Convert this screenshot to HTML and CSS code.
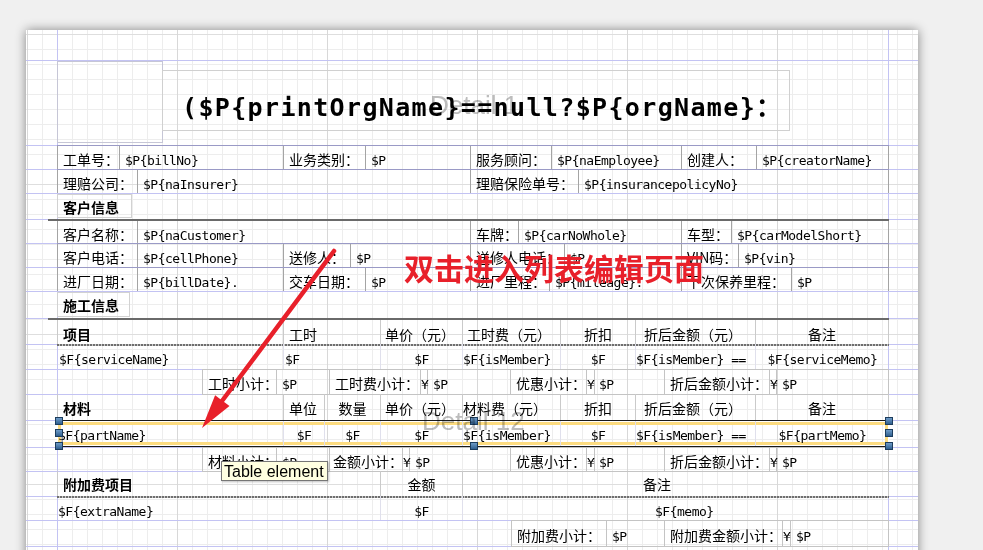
FILE: index.html
```html
<!DOCTYPE html>
<html lang="zh-CN">
<head>
<meta charset="utf-8">
<title>Report Designer</title>
<link rel="stylesheet" href="styles.css">
</head>
<body>
<div class="page">
  <div class="band h85">
    <div class="content title-row">
      <div class="logo-box"></div>
      <div class="title-box"><span class="title-text">($P{printOrgName}==null?$P{orgName}：</span></div>
    </div>
  </div>

  <div class="band h24">
    <div class="content info r1">
      <div class="c">工单号：</div>
      <div class="c"><span class="v">$P{billNo}</span></div>
      <div class="c">业务类别：</div>
      <div class="c"><span class="v">$P</span></div>
      <div class="c">服务顾问：</div>
      <div class="c"><span class="v">$P{naEmployee}</span></div>
      <div class="c">创建人：</div>
      <div class="c"><span class="v">$P{creatorName}</span></div>
    </div>
  </div>

  <div class="band h24">
    <div class="content info r2">
      <div class="c">理赔公司：</div>
      <div class="c"><span class="v">$P{naInsurer}</span></div>
      <div class="c">理赔保险单号：</div>
      <div class="c"><span class="v">$P{insurancepolicyNo}</span></div>
    </div>
  </div>

  <div class="band h26">
    <div class="content sec"><div class="sbox s1">客户信息</div></div>
  </div>

  <div class="band h24">
    <div class="content info thick r3">
      <div class="c">客户名称：</div>
      <div class="c"><span class="v">$P{naCustomer}</span></div>
      <div class="c">车牌：</div>
      <div class="c"><span class="v">$P{carNoWhole}</span></div>
      <div class="c">车型：</div>
      <div class="c"><span class="v">$P{carModelShort}</span></div>
    </div>
  </div>

  <div class="band h24">
    <div class="content info r4">
      <div class="c">客户电话：</div>
      <div class="c"><span class="v">$P{cellPhone}</span></div>
      <div class="c">送修人：</div>
      <div class="c"><span class="v">$P</span></div>
      <div class="c">送修人电话：</div>
      <div class="c"><span class="v">$P</span></div>
      <div class="c">VIN码：</div>
      <div class="c"><span class="v">$P{vin}</span></div>
    </div>
  </div>

  <div class="band h24">
    <div class="content info r5">
      <div class="c">进厂日期：</div>
      <div class="c"><span class="v">$P{billDate}.</span></div>
      <div class="c">交车日期：</div>
      <div class="c"><span class="v">$P</span></div>
      <div class="c">进厂里程：</div>
      <div class="c"><span class="v">$P{mileage}.</span></div>
      <div class="c">下次保养里程：</div>
      <div class="c"><span class="v">$P</span></div>
    </div>
  </div>

  <div class="band h27">
    <div class="content sec"><div class="sbox s2">施工信息</div></div>
  </div>

  <div class="band h26">
    <div class="content th thick t1">
      <div class="c b">项目</div>
      <div class="c">工时</div>
      <div class="c p4">单价（元）</div>
      <div class="c p4">工时费（元）</div>
      <div class="c ctr">折扣</div>
      <div class="c p8">折后金额（元）</div>
      <div class="c ctr">备注</div>
    </div>
  </div>

  <div class="band h25">
    <div class="content td t1">
      <div class="c p2"><span class="v">$F{serviceName}</span></div>
      <div class="c p1"><span class="v">$F</span></div>
      <div class="c ctr"><span class="v">$F</span></div>
      <div class="c p0"><span class="v">$F{isMember}</span></div>
      <div class="c ctr"><span class="v">$F</span></div>
      <div class="c p0"><span class="v">$F{isMember} ==</span></div>
      <div class="c ctr"><span class="v">$F{serviceMemo}</span></div>
    </div>
  </div>

  <div class="band h25">
    <div class="content sub u1">
      <div></div>
      <div class="c bx first">工时小计：</div>
      <div class="c bx"><span class="v">$P</span></div>
      <div class="c bx">工时费小计：</div>
      <div class="c bx yen"><span class="v">¥</span></div>
      <div class="c bx"><span class="v">$P</span></div>
      <div class="c bx">优惠小计：</div>
      <div class="c bx yen"><span class="v">¥</span></div>
      <div class="c bx p4"><span class="v">$P</span></div>
      <div class="c bx">折后金额小计：</div>
      <div class="c bx yen"><span class="v">¥</span></div>
      <div class="c bx"><span class="v">$P</span></div>
    </div>
  </div>

  <div class="band h26">
    <div class="content th t2">
      <div class="c b">材料</div>
      <div class="c">单位</div>
      <div class="c ctr">数量</div>
      <div class="c p4">单价（元）</div>
      <div class="c p0">材料费（元）</div>
      <div class="c ctr">折扣</div>
      <div class="c p8">折后金额（元）</div>
      <div class="c ctr">备注</div>
    </div>
  </div>

  <div class="band h27">
    <div class="content td sel t2">
      <div class="c p1"><span class="v">$F{partName}</span></div>
      <div class="c ctr"><span class="v">$F</span></div>
      <div class="c ctr"><span class="v">$F</span></div>
      <div class="c ctr"><span class="v">$F</span></div>
      <div class="c p0"><span class="v">$F{isMember}</span></div>
      <div class="c ctr"><span class="v">$F</span></div>
      <div class="c p0"><span class="v">$F{isMember} ==</span></div>
      <div class="c ctr"><span class="v">$F{partMemo}</span></div>
      <span class="hd hl1"></span><span class="hd hl2"></span><span class="hd hl3"></span>
      <span class="hd hm1"></span><span class="hd hm3"></span>
      <span class="hd hr1"></span><span class="hd hr2"></span><span class="hd hr3"></span>
    </div>
  </div>

  <div class="band h24">
    <div class="content sub u2">
      <div></div>
      <div class="c bx first">材料小计：</div>
      <div class="c bx"><span class="v">$P</span></div>
      <div class="c bx p3">金额小计：</div>
      <div class="c bx yen"><span class="v">¥</span></div>
      <div class="c bx"><span class="v">$P</span></div>
      <div class="c bx">优惠小计：</div>
      <div class="c bx yen"><span class="v">¥</span></div>
      <div class="c bx p4"><span class="v">$P</span></div>
      <div class="c bx">折后金额小计：</div>
      <div class="c bx yen"><span class="v">¥</span></div>
      <div class="c bx"><span class="v">$P</span></div>
    </div>
  </div>

  <div class="band h25">
    <div class="content th t3">
      <div class="c b">附加费项目</div>
      <div class="c ctr">金额</div>
      <div class="c pb">备注</div>
    </div>
  </div>

  <div class="band h24">
    <div class="content td t3">
      <div class="c p1"><span class="v">$F{extraName}</span></div>
      <div class="c ctr"><span class="v">$F</span></div>
      <div class="c pm"><span class="v">$F{memo}</span></div>
    </div>
  </div>

  <div class="band h26">
    <div class="content sub u3">
      <div></div>
      <div class="c bx first">附加费小计：</div>
      <div class="c bx"><span class="v">$P</span></div>
      <div class="c bx">附加费金额小计：</div>
      <div class="c bx yen"><span class="v">¥</span></div>
      <div class="c bx"><span class="v">$P</span></div>
    </div>
  </div>

  <div class="band h30"><div class="content"></div></div>

  <div class="wm wm1">Detail 1</div>
  <div class="wm wm2">Detail 12</div>

  <svg class="arrow" width="892" height="540" viewBox="0 0 892 540">
    <line x1="308" y1="221" x2="196" y2="371" stroke="#e8202a" stroke-width="4.5" stroke-linecap="round"/>
    <polygon points="176,398 203.5,376.1 189.1,365.3" fill="#e8202a"/>
  </svg>
  <div class="note">双击进入列表编辑页面</div>
  <div class="tip">Table element</div>
</div>
</body>
</html>
```

FILE: styles.css
```css
* { box-sizing: border-box; }
html, body { margin: 0; padding: 0; overflow: hidden; background: #f0f0f0; }
body { font-family: "Noto Sans CJK SC", "Noto Sans CJK JP", sans-serif; color: #000; }

.page {
  position: relative;
  margin: 30px 0 0 26px;
  width: 892px;
  height: 540px;
  padding-top: 30px;
  background-color: #fff;
  background-image:
    linear-gradient(to right, transparent 31px, #c3c3f3 31px, #c3c3f3 32px, transparent 32px, transparent 862px, #c3c3f3 862px, #c3c3f3 863px, transparent 863px),
    linear-gradient(to right, #d8d8d8 1px, transparent 1px),
    linear-gradient(to bottom, #dedede 1px, transparent 1px),
    linear-gradient(to right, #ededed 1px, transparent 1px),
    linear-gradient(to bottom, #ededed 1px, transparent 1px);
  background-size: 100% 100%, 150px 100%, 100% 150px, 15px 100%, 100% 15px;
  background-position: 0 0, 1px 0, 0 4px, 1px 0, 0 4px;
  box-shadow: 0 0 10px rgba(0, 0, 0, 0.45);
}

.band { border-top: 1px solid #c3c3f3; height: var(--h); }
.h85 { --h: 85px; }
.h24 { --h: 24px; }
.h25 { --h: 25px; }
.h26 { --h: 26px; }
.h27 { --h: 27px; }
.h30 { --h: 30px; }

.content {
  margin: -1px 0 0 31px;
  width: 832px;
  height: calc(100% + 1px);
}

/* title band */
.title-row { display: flex; align-items: flex-start; }
.logo-box {
  width: 106px;
  height: 82px;
  margin-top: 1px;
  border: 1px solid #c6c6d6;
  flex: none;
}
.title-box {
  width: 628px;
  height: 61px;
  margin: 10px 0 0 -1px;
  border: 1px solid #d0d0d0;
  padding: 22px 0 0 19px;
  overflow: hidden;
  flex: none;
}
.title-text {
  font: bold 25px "DejaVu Sans Mono", "Noto Sans CJK SC", monospace;
  letter-spacing: 1.35px;
  line-height: 30px;
  white-space: nowrap;
}

/* cells */
.c {
  padding: 3px 0 0 5px;
  line-height: calc(var(--h) - 4px);
  font-size: 14px;
  white-space: nowrap;
  overflow: hidden;
}
.v {
  font: 13px "DejaVu Sans Mono", monospace;
  letter-spacing: -0.5px;
  line-height: 1;
}
.b { font-weight: bold; }
.p0 { padding-left: 0; }
.p1 { padding-left: 1px; }
.p2 { padding-left: 2px; }
.p3 { padding-left: 3px; }
.p4 { padding-left: 4px; }
.p8 { padding-left: 8px; }
.pb { padding-left: 180px; }
.pm { padding-left: 192px; }
.ctr { padding-left: 0; text-align: center; }

/* info rows */
.info { display: grid; border-top: 1px solid #9a9ac6; }
.info .c { border-right: 1px solid #a4a4a4; }
.info .c:first-child { border-left: 1px solid #a4a4a4; }
.thick {
  margin-left: 22px;
  width: 841px;
  padding-left: 9px;
  border-top: 2px solid #6a6a6a;
}
.r1 { grid-template-columns: 63px 164px 82px 105px 81px 130px 75px 132px; }
.r2 { grid-template-columns: 81px 333px 108px 310px; }
.r3 { grid-template-columns: 81px 333px 48px 163px 50px 157px; }
.r4 { grid-template-columns: 81px 146px 67px 120px 94px 117px 57px 150px; }
.r5 { grid-template-columns: 81px 146px 82px 105px 79px 132px 110px 97px; }

/* section headers */
.sbox {
  height: 24px;
  margin-top: 1px;
  border: 1px solid #d2d2d2;
  padding: 3px 0 0 5px;
  font-size: 14px;
  font-weight: bold;
  line-height: 18px;
  white-space: nowrap;
}
.s1 { width: 75px; }
.s2 { width: 73px; height: 25px; }

/* table header / detail rows */
.th { display: grid; }
.th .c { border-right: 1px solid #cacaca; }
.th .c:first-child { border-left: 1px solid #cacaca; }
.td {
  display: grid;
  background-image: repeating-linear-gradient(90deg, #6e6e6e 0 2px, #c8c8c8 2px 3px);
  background-size: 100% 2px;
  background-repeat: no-repeat;
}
.td .c { border-right: 1px solid #e0e0ec; padding-top: 4px; }
.td .c:last-of-type { border-right: none; }
.t1 { grid-template-columns: 227px 97px 82px 98px 75px 120px 133px; }
.t2 { grid-template-columns: 227px 41px 56px 82px 98px 75px 120px 133px; }
.t3 { grid-template-columns: 324px 82px 426px; }

.sel {
  position: relative;
  background-image: none;
  border-top: 1px solid #1a1a1a;
  border-bottom: 1px solid #1a1a1a;
  box-shadow: inset 0 0 0 1px #fff, inset 0 0 0 4px #fddc80;
}
.sel .c { padding-top: 3px; line-height: 20px; }
.hd {
  position: absolute;
  width: 8px;
  height: 8px;
  background: linear-gradient(#6f9cc8, #2f5f8f);
  border: 1px solid #1d3d5d;
}
.hl1 { left: -2px; top: -4px; }
.hl2 { left: -2px; top: 8px; }
.hl3 { left: -2px; top: 21px; }
.hm1 { left: 413px; top: -4px; }
.hm3 { left: 413px; top: 21px; }
.hr1 { left: 828px; top: -4px; }
.hr2 { left: 828px; top: 8px; }
.hr3 { left: 828px; top: 21px; }

/* subtotal rows */
.sub { display: grid; }
.bx {
  border-top: 1px solid #c4c4c4;
  border-bottom: 1px solid #c4c4c4;
  border-right: 1px solid #c4c4c4;
  overflow: visible;
}
.bx.first { border-left: 1px solid #c4c4c4; }
.yen { padding-left: 0; }
.u1 { grid-template-columns: 145px 75px 53px 91px 7px 83px 76px 8px 70px 105px 7px 112px; }
.u2 { grid-template-columns: 145px 75px 53px 73px 7px 101px 76px 8px 70px 105px 7px 112px; }
.u3 { grid-template-columns: 454px 96px 58px 118px 8px 98px; }

/* overlays */
.wm {
  position: absolute;
  font: 26px "Liberation Sans", Arial, sans-serif;
  line-height: 1;
  color: #bcbcbc;
  white-space: nowrap;
  mix-blend-mode: multiply;
}
.wm1 { left: 404px; top: 62px; }
.wm2 { left: 396px; top: 378px; }

.arrow { position: absolute; left: 0; top: 0; pointer-events: none; }

.note {
  position: absolute;
  left: 378px;
  top: 222px;
  font: bold 30px "Noto Sans CJK SC", sans-serif;
  line-height: 1;
  color: #e8202a;
  white-space: nowrap;
}

.tip {
  position: absolute;
  left: 195px;
  top: 431px;
  width: 107px;
  height: 20px;
  padding: 1px 0 0 2px;
  background: #ffffe1;
  border: 1px solid #767676;
  font: 16px "Liberation Sans", Arial, sans-serif;
  line-height: 17px;
  white-space: nowrap;
  box-shadow: 1px 1px 2px rgba(0, 0, 0, 0.25);
}
```
